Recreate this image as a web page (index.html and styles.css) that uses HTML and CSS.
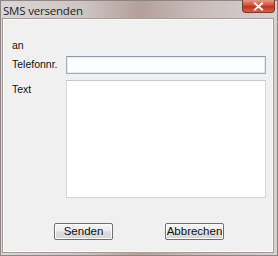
FILE: index.html
```html
<!DOCTYPE html>
<html lang="de">
<head>
    <meta charset="UTF-8">
    <meta name="viewport" content="width=device-width, initial-scale=1.0">
    <title>SMS versenden</title>
    <link rel="stylesheet" href="styles.css">
</head>
<body>

<div class="window">
    <!-- Title bar -->
    <div class="titlebar">
        <span class="title">SMS versenden</span>
        <button class="close-btn" aria-label="Schließen">
            <svg width="11" height="9" viewBox="0 0 11 9">
                <path d="M2 1.5 L9 7.5 M9 1.5 L2 7.5" stroke="#fff" stroke-width="2" stroke-linecap="square"/>
            </svg>
        </button>
    </div>

    <!-- Dialog body -->
    <div class="client">
        <div class="form">
            <label class="lbl">an</label>
            <span></span>

            <label class="lbl" for="phone">Telefonnr.</label>
            <input type="text" id="phone" class="field">

            <label class="lbl lbl-top" for="msg">Text</label>
            <textarea id="msg" class="area"></textarea>
        </div>

        <div class="buttons">
            <button class="btn">Senden</button>
            <button class="btn">Abbrechen</button>
        </div>
    </div>
</div>

</body>
</html>
```

FILE: styles.css
```css
* {
    box-sizing: border-box;
}
body {
    margin: 0;
    padding: 0;
    width: 278px;
    height: 256px;
    overflow: hidden;
    font-family: "Liberation Sans", Arial, sans-serif;
}
.window {
    width: 278px;
    height: 256px;
    display: flex;
    flex-direction: column;
    background: linear-gradient(90deg, #dad7d6 0%, #cdc5c3 30%, #b49f9a 50%, #c7bbb8 70%, #d6d2d1 100%);
    border: 1px solid #8f8584;
}
.titlebar {
    height: 18px;
    display: flex;
    align-items: flex-start;
    justify-content: space-between;
    padding-left: 2px;
}
.title {
    font-family: "Open Sans", "Noto Sans", sans-serif;
    font-size: 11.5px;
    line-height: 19px;
    color: #1e1e1e;
    letter-spacing: -0.2px;
}
.close-btn {
    width: 33px;
    height: 13px;
    margin-right: 2px;
    margin-top: -1px;
    padding: 0;
    border: 1px solid #7a3a32;
    border-top: none;
    border-radius: 0 0 4px 4px;
    background: linear-gradient(180deg, #e49a88 0%, #d24f36 45%, #bd3520 55%, #d2634a 100%);
    display: flex;
    align-items: center;
    justify-content: center;
}
.client {
    flex: 1;
    margin: 0 4px 3px 2px;
    background: #f0f0f0;
    border: 1px solid #fbfbfb;
    outline: 1px solid #a59b99;
    display: flex;
    flex-direction: column;
    padding: 17px 6px 0 8px;
}
.form {
    display: grid;
    grid-template-columns: 54px 1fr;
    grid-template-rows: 19px 24px 118px;
}
.lbl {
    font-size: 10.5px;
    color: #111;
    line-height: 17px;
    align-self: start;
}
.lbl-top {
    margin-top: 1px;
}
.field {
    height: 18px;
    margin: 0;
    padding: 1px 3px;
    border: 1px solid #abadb3;
    border-top-color: #8e9aa8;
    background: #fcfdff;
    box-shadow: inset 0 0 0 1px #e3eaf2;
    font: 11px "Liberation Sans", Arial, sans-serif;
    outline: none;
}
.area {
    height: 118px;
    margin: 0;
    border: 1px solid #d6d6d6;
    border-top-color: #c7c7c7;
    background: #ffffff;
    resize: none;
    outline: none;
    font: 11px "Liberation Sans", Arial, sans-serif;
}
.buttons {
    display: flex;
    padding-left: 42px;
    gap: 52px;
    margin-top: 25px;
}
.btn {
    width: 59px;
    height: 17px;
    padding: 0;
    border: 1px solid #707070;
    border-radius: 2px;
    background: linear-gradient(180deg, #f6f6f6 0%, #ececec 48%, #dcdcdc 52%, #d6d6d6 100%);
    box-shadow: inset 0 0 0 1px #fcfcfc;
    font: 11.5px "Liberation Sans", Arial, sans-serif;
    color: #111;
    line-height: 15px;
}
```
